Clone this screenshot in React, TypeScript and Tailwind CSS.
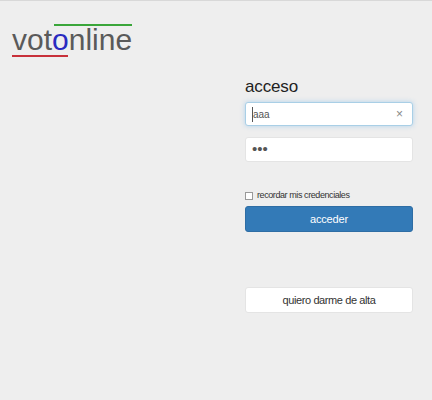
export default function App() {
  return (
    <div className="h-[400px] w-[432px] overflow-hidden bg-[#eeeeee] border-t border-[#d8d8d8] font-['Liberation_Sans',Arial,sans-serif] text-[#333333]">
      <div className="relative ml-3 mt-[22px] h-[34px] w-[122px]">
        <span className="absolute left-[42px] top-[1px] h-[2px] w-[78px] bg-[#3aa63a]" />
        <div className="pt-[1px] text-[30px] leading-[32px] text-[#5a5a5a] whitespace-nowrap">
          vot<span className="text-[#2a2ac0]">o</span>nline
        </div>
        <span className="absolute left-0 top-[32px] h-[2px] w-[56px] bg-[#c8303a]" />
      </div>
      <div className="ml-[245px] mt-[20px] w-[168px] flex flex-col">
        <h1 className="text-[17px] leading-[20px] tracking-[-0.15px] text-[#222222]">acceso</h1>
        <div className="mt-[5px] flex h-[24px] items-center justify-between rounded-[3px] border border-[#a9cfe6] bg-white pl-[6px] pr-[9px] text-[10px] text-[#555555] shadow-[0_0_5px_rgba(102,175,233,0.45)]">
          <span className="border-l border-[#555555]">aaa</span>
          <span className="text-[12px] leading-none text-[#888888]">×</span>
        </div>
        <div className="mt-[11px] flex h-[25px] items-center rounded-[3px] border border-[#e4e4e4] bg-white pl-[6px] text-[15px] text-[#555555]">
          •••
        </div>
        <label className="mt-[27px] flex h-[13px] items-center gap-[4px] text-[9px] tracking-[-0.42px] text-[#333333]">
          <span className="h-[8px] w-[8px] border border-[#999999] bg-white" />
          recordar mis credenciales
        </label>
        <button className="mt-[4px] h-[26px] rounded-[3px] border border-[#2e6da4] bg-[#337ab7] text-[11px] tracking-[-0.15px] text-white">
          acceder
        </button>
        <button className="mt-[55px] h-[26px] rounded-[3px] border border-[#e4e4e4] bg-white text-[11px] tracking-[-0.4px] text-[#333333]">
          quiero darme de alta
        </button>
      </div>
    </div>
  );
}
